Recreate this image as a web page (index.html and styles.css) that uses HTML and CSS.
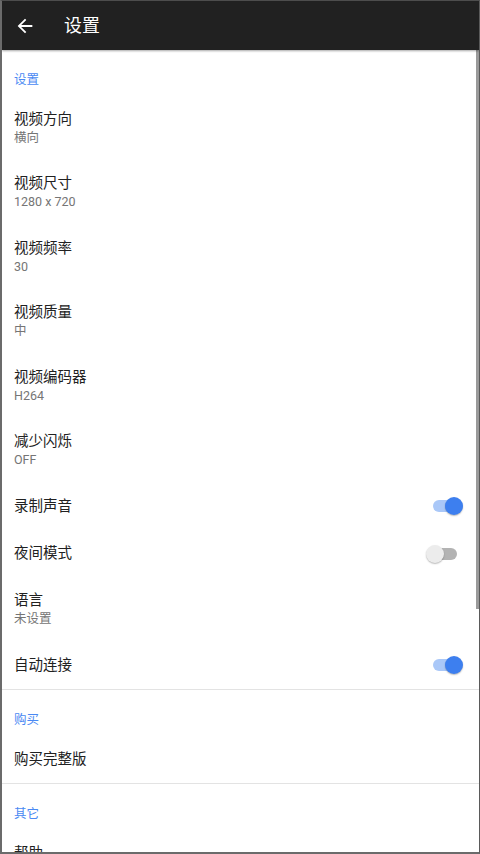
FILE: index.html
```html
<!DOCTYPE html>
<html lang="zh-CN">
<head>
<meta charset="utf-8">
<title>设置</title>
<link rel="stylesheet" href="styles.css">
</head>
<body>
<div class="screen">
  <header class="appbar">
    <svg class="back" viewBox="0 0 24 24" aria-hidden="true"><path d="M20 11H7.83l5.59-5.59L12 4l-8 8 8 8 1.41-1.41L7.83 13H20v-2z" fill="#fff"/></svg>
    <h1 class="appbar-title">设置</h1>
  </header>
  <main class="list">
    <div class="category">设置</div>
    <div class="item two"><div class="texts"><div class="title">视频方向</div><div class="summary">横向</div></div></div>
    <div class="item two"><div class="texts"><div class="title">视频尺寸</div><div class="summary">1280 x 720</div></div></div>
    <div class="item two"><div class="texts"><div class="title">视频频率</div><div class="summary">30</div></div></div>
    <div class="item two"><div class="texts"><div class="title">视频质量</div><div class="summary">中</div></div></div>
    <div class="item two"><div class="texts"><div class="title">视频编码器</div><div class="summary">H264</div></div></div>
    <div class="item two"><div class="texts"><div class="title">减少闪烁</div><div class="summary">OFF</div></div></div>
    <div class="item one"><div class="texts"><div class="title">录制声音</div></div><div class="switch on"><span class="track"></span><span class="thumb"></span></div></div>
    <div class="item one"><div class="texts"><div class="title">夜间模式</div></div><div class="switch"><span class="track"></span><span class="thumb"></span></div></div>
    <div class="item two"><div class="texts"><div class="title">语言</div><div class="summary">未设置</div></div></div>
    <div class="item one"><div class="texts"><div class="title">自动连接</div></div><div class="switch on"><span class="track"></span><span class="thumb"></span></div></div>
    <div class="divider"></div>
    <div class="category">购买</div>
    <div class="item one short"><div class="texts"><div class="title">购买完整版</div></div></div>
    <div class="divider"></div>
    <div class="category">其它</div>
    <div class="item one"><div class="texts"><div class="title">帮助</div></div></div>
  </main>
  <div class="scrollbar"></div>
</div>
</body>
</html>
```
FILE: styles.css
```css
* { box-sizing: border-box; }
html, body { margin: 0; padding: 0; background: #fff; }
body {
  font-family: Roboto, "Noto Sans CJK SC", "Noto Sans", sans-serif;
}
.screen {
  position: relative;
  width: 480px;
  height: 854px;
  overflow: hidden;
  background: #fff;
  border-top: 1px solid #4d4d4d;
  border-left: 2px solid #6b6b6b;
  border-right: 1px solid #5a5a5a;
  border-bottom: 2px solid #6b6b6b;
}
.appbar {
  position: relative;
  z-index: 2;
  height: 49px;
  background: #212121;
  display: flex;
  align-items: center;
  box-shadow: 0 1px 2px rgba(0,0,0,0.35);
}
.back {
  width: 22px;
  height: 22px;
  margin-left: 12px;
  flex: none;
}
.appbar-title {
  margin: 0 0 0 28px;
  font-size: 17.9px;
  font-weight: 400;
  color: #fff;
  line-height: 24px;
}
.list {
  display: flex;
  flex-direction: column;
}
.category {
  height: 46px;
  padding: 22px 0 8px 12px;
  font-size: 12.5px;
  line-height: 16px;
  color: #4a89f3;
  flex: none;
}
.item {
  display: flex;
  align-items: center;
  padding-left: 12px;
  flex: none;
}
.item.two { height: 64.4px; }
.item.one { height: 47.5px; }
.item.one.short { height: 46.5px; }
.texts { flex: 1; display: flex; flex-direction: column; padding-top: 1.5px; }
.title {
  font-size: 14.5px;
  line-height: 18px;
  color: #212121;
}
.summary {
  font-size: 12.5px;
  line-height: 18px;
  color: #757575;
}
.divider {
  height: 1px;
  background: #e3e3e3;
  flex: none;
}
.switch {
  position: relative;
  width: 38px;
  height: 18px;
  margin-right: 15px;
  flex: none;
}
.switch .track {
  position: absolute;
  left: 7px;
  top: 3px;
  width: 24px;
  height: 12px;
  border-radius: 6px;
  background: #b3b3b3;
}
.switch .thumb {
  position: absolute;
  left: 0;
  top: 0;
  width: 18px;
  height: 18px;
  border-radius: 50%;
  background: #ececec;
  box-shadow: 0 1px 1.5px rgba(0,0,0,0.28);
}
.switch.on .track { background: #aac8f8; }
.switch.on .thumb { left: 19px; background: #3d7fef; }
.scrollbar {
  position: absolute;
  right: 0;
  top: 49px;
  width: 3px;
  height: 559px;
  background: #9a9a9a;
}
```
